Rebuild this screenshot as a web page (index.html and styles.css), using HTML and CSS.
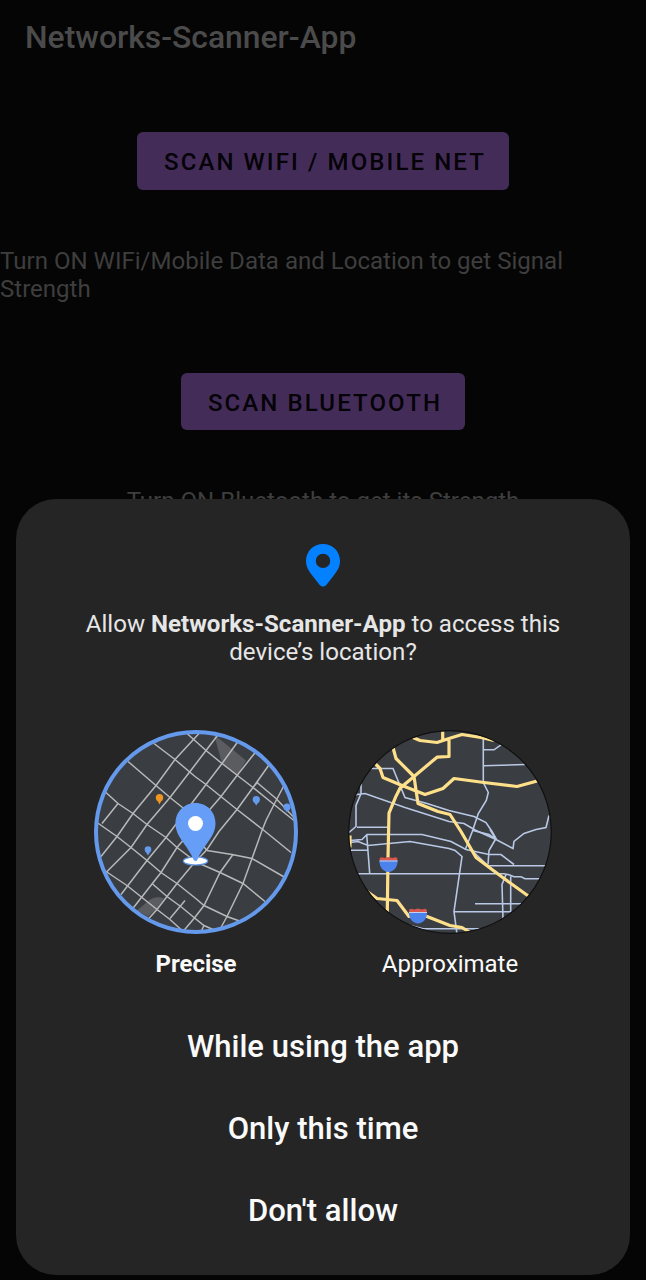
FILE: index.html
```html
<!DOCTYPE html>
<html lang="en">
<head>
<meta charset="utf-8">
<title>Networks-Scanner-App</title>
<link rel="stylesheet" href="styles.css">
</head>
<body>
<main class="app">
  <h1 class="title">Networks-Scanner-App</h1>
  <div class="scan"><button class="scan-btn">SCAN WIFI / MOBILE NET</button></div>
  <p class="hint">Turn ON WIFi/Mobile Data and Location to get Signal Strength</p>
  <div class="scan scan-second"><button class="scan-btn">SCAN BLUETOOTH</button></div>
  <p class="hint hint-center">Turn ON Bluetooth to get its Strength</p>
</main>
<section class="dialog">
  <svg class="pin" viewBox="0 0 34 43" width="34" height="43"><path fill="#0381fe" fill-rule="evenodd" d="M17 0C7.600 0 0 7.300 0 17c0 5.500 2.600 9.700 5.500 13.500l8 10.200c1.900 2.400 5.100 2.400 7 0l8-10.200C31.400 26.700 34 22.500 34 17 34 7.300 26.400 0 17 0zm0 9.700a7.200 7.200 0 1 1 0 14.400 7.200 7.200 0 0 1 0-14.400z"/></svg>
  <p class="question">Allow <b>Networks-Scanner-App</b> to access this<br>device’s location?</p>
  <div class="choices">
    <div class="choice selected">
      <svg class="map" viewBox="94 729.500 204 204" width="204" height="204">
        <defs><clipPath id="precise"><circle cx="196" cy="831.500" r="101"/></clipPath></defs>
        <g clip-path="url(#precise)">
          <path fill="#3a3d42" d="M90 725h212v212H90z"/>
          <path fill="#5a5c60" d="M214 734l32 26-9 15-15-12zM137 910l13-11q7-4 14-1l-8 11-8 7z"/>
          <g fill="none" stroke="#b7b8ba" stroke-width="1.500">
            <path d="M128 761l28 24 14 12 20 16M154 743l21 16 20 17 11 8 31 25 27 21 27 22M187 733l19 17 16 13 31 24 21 17 20 16M106 792l12 11 15 10 14 11 19 13 11 10 20 15 7 3 16 7 23 11 22 18M97 822l20 14 14 11 16 13 14 12 16 11 20 16 7 6 23 11 14 5M106 871l21 14 15 12 15 12 13 10 11 10M152 883l15 13 15 11 12 10 10 8 9 4M257 782l19 16 18 19"/>
            <path d="M118 803l-16 20M199 733l-24 26-19 26-23 28-16 23-16 20M219 733l-13 17-16 21-20 26-23 27-16 23-25 25M238 741l-16 22-16 21-40 53-19 23-26 34M256 751l-19 24-16 21-44 51-16 25-29 37M270 763l-17 24-16 22-18 22-12 18-15 16-15 18-20 26-10 11M258 781l-5 6M284 785l-10 19-8 16-4 10-10 28-9 25-16 33-6 11M233 854l-13 18-16 33-10 13-11 13M185 900l-15 18M204 925l-3 6M207 850l25 4 20 4 33 19M207 850l-5-6"/>
          </g>
          <circle cx="159.500" cy="797.300" r="3.700" fill="#ee9522"/><path fill="#ee9522" d="M157 799h5l-2.500 5z"/>
          <g fill="#6499ec"><circle cx="256.300" cy="799" r="3.600"/><path d="M253.500 801h5.600l-2.800 4z"/><circle cx="287" cy="806.500" r="3.600"/><path d="M284.200 808h5.600l-2.800 4z"/><circle cx="148" cy="849" r="3.300"/><path d="M145.500 851h5l-2.500 4z"/></g>
          <ellipse cx="195.500" cy="860.500" rx="12.200" ry="4" fill="#fff" stroke="#5c91e4" stroke-width="1.200"/>
          <path fill="#669df6" d="M195.500 802.500c-11.300 0-20 9-20 20.300 0 14 11.500 21 17.500 35.200.7 1.700 1.200 2.500 2.500 2.500s1.800-.8 2.500-2.500c6-14.200 17.500-21.200 17.500-35.200 0-11.300-8.700-20.300-20-20.300z"/>
          <circle cx="195.500" cy="823" r="7.500" fill="#fff"/>
        </g>
        <circle cx="196" cy="831.500" r="100" fill="none" stroke="#6499ec" stroke-width="4"/>
      </svg>
      <span class="label">Precise</span>
    </div>
    <div class="choice">
      <svg class="map" viewBox="348 729.500 204 204" width="204" height="204">
        <defs><clipPath id="approx"><circle cx="450" cy="831.500" r="101"/></clipPath></defs>
        <g clip-path="url(#approx)">
          <path fill="#3a3d42" d="M345 725h212v212H345z"/>
          <g fill="none" stroke="#b9c8e5" stroke-width="1.600">
            <path d="M370 768h23l12 29 22 6 22 7 25 6 12 6 6 9 4 7-7 12-1 14M354 795l3-1 8-1 40 14 44 14 15 2 12 7M476 830l20 9 17 9 1-7 10-8 12-4 10-2 3-12M361 778v15l-5 12v21l-7 6M357 826.700h32M483.300 737v45l5 10-2 8-8 13-6 18-7 18M484 749.300h10l7-5M484 765.300l41-1.300"/>
            <path d="M350 840l12-1 5-5h55l29 7 15 8 23 5h12l13 10M350 842l8-1 10 4 42-4 39 7 6 2 7 6-8 55 3 23M350 849.700h18M366.700 834l3 39M356 873.300h148l5 1 5 2h7l4 2h18M474 852l14 13.300h58M473 830l16 4 7 5-6-10M506 874l-4 10 1 34M510.700 876v35.300H454M475 903.300h47M406 924l17 4.300h59"/>
          </g>
          <g fill="none" stroke="#ffe08a" stroke-width="3.200" stroke-linejoin="round">
            <path d="M413 737l7 3 17 2 12-4 13-4 19 3 13 3M442.700 728v13M449 738v18l-12 .700-37 31-4 8-7 17-1 44-.700 55M393 747l3 11 18 18 4 27 20 8 12 3 11 17 15 26 28 21 25 18M375 763l5 5 3 9 19 8 23 9 18-6 11-10 30 4 33 4 22-6M367 891l10 7 20 2 12 16h18l23 9 12 2 8 5M350 835v12"/>
          </g>
          <g id="shield"><path fill="#d9574c" d="M379.700 857.500l2-.8 3 .8 3.800-1 3.800 1 3-.8 2 .8v3h-17.600z"/><path fill="#4b82eb" d="M379.500 860h18c.500 6.500-4 11.500-9 11.500s-9.500-5-9-11.500z"/><path stroke="#c6d0ec" stroke-width="1" d="M379.500 860.500h18"/></g>
          <use href="#shield" x="29.500" y="51.500"/>
        </g>
        <circle cx="450" cy="831.500" r="101.300" fill="none" stroke="#111" stroke-width="1.200"/>
      </svg>
      <span class="label">Approximate</span>
    </div>
  </div>
  <div class="actions">
    <button class="action">While using the app</button>
    <button class="action">Only this time</button>
    <button class="action">Don't allow</button>
  </div>
</section>
</body>
</html>
```
FILE: styles.css
```css
* { box-sizing: border-box; }
body {
  margin: 0;
  width: 646px;
  height: 1280px;
  position: relative;
  overflow: hidden;
  background: #050505;
  font-family: Roboto, sans-serif;
}
button { border: 0; margin: 0; padding: 0; background: none; font-family: inherit; }
.title { margin: 0; padding: 17px 0 0 25px; height: 132.4px; font-size: 31.850px; line-height: 40px; font-weight: 500; color: #4b4b4b; }
.scan { display: flex; justify-content: center; height: 57.500px; }
.scan-second { margin-top: 70px; }
.scan-btn { padding: 2px 23px 0 27px; background: #432d58; border-radius: 6px; color: #050208; font-size: 24px; font-weight: 500; letter-spacing: 2.100px; white-space: nowrap; }
.hint { margin: 57px 0 0; font-size: 24.050px; line-height: 28px; color: #3e3e3e; }
.hint-center { text-align: center; }
.dialog {
  position: absolute;
  left: 16px;
  top: 499px;
  width: 614px;
  height: 776px;
  padding-top: 45px;
  border-radius: 40px;
  background: #252525;
  display: flex;
  flex-direction: column;
  align-items: center;
}
.pin { display: block; }
.question { margin: 23px 0 0; text-align: center; font-size: 24.100px; line-height: 28px; color: #e6e6e6; }
.choices { display: flex; gap: 50px; margin-top: 63.500px; }
.choice { width: 204px; display: flex; flex-direction: column; align-items: center; }
.map { display: block; }
.label { margin-top: 16.500px; font-size: 24px; line-height: 28px; color: #fafafa; }
.selected .label { font-weight: 700; }
.actions { margin-top: 27px; display: flex; flex-direction: column; align-items: center; }
.action { height: 82px; font-size: 31.050px; font-weight: 500; color: #fafafa; }
```
